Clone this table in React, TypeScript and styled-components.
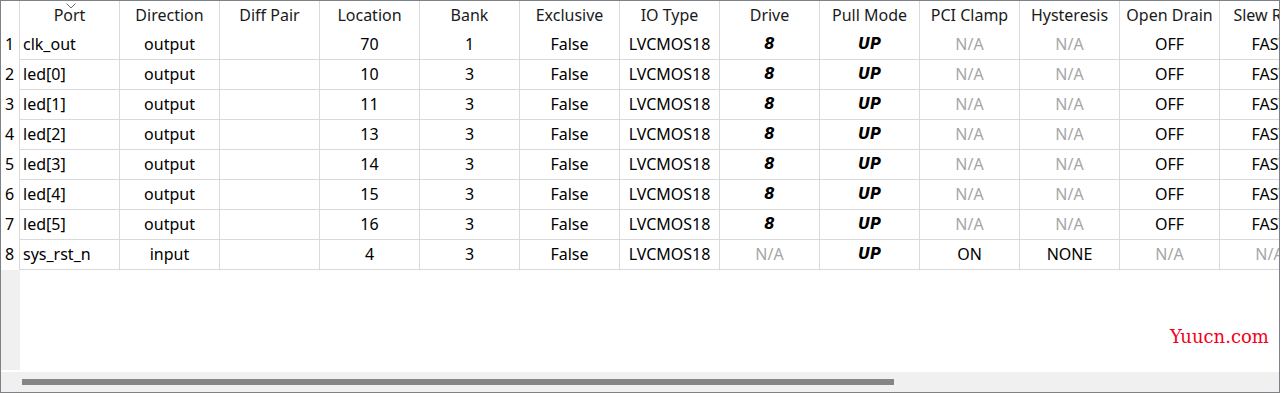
import React from 'react'
import styled, { createGlobalStyle } from 'styled-components'

const GlobalStyle = createGlobalStyle`
    html, body {
        margin: 0;
        padding: 0;
        background: #FFFFFF;
    }
`

/* styled elements */
const Frame = styled.div`
    position: relative;
    width: 1280px;
    height: 393px;
    box-sizing: border-box;
    border: 1px solid #7D828A;
    background: #FFFFFF;
    display: flex;
    flex-direction: column;
    overflow: hidden;
    font-family: "Noto Sans", "Noto Sans CJK SC", sans-serif;
    font-size: 16px;
    color: #000000;
`

const Viewport = styled.div`
    height: 371px;
    flex: none;
    display: flex;
    overflow: hidden;
`

const Gutter = styled.div`
    width: 19px;
    flex: none;
    display: flex;
    flex-direction: column;
`

const GutterHead = styled.div`
    height: 29px;
    flex: none;
    box-sizing: border-box;
    border-right: 1px solid #D9D9D9;
`

const RowNumber = styled.div`
    height: 30px;
    flex: none;
    box-sizing: border-box;
    border-right: 1px solid #D9D9D9;
    display: flex;
    align-items: center;
    justify-content: center;
    padding: 0 1px 2px 0;
`

const GutterFill = styled.div`
    height: 100px;
    flex: none;
    background: #F0F0F0;
`

const Grid = styled.div`
    display: grid;
    grid-template-columns: repeat(13, 100px);
    grid-auto-rows: 30px;
    grid-template-rows: 29px;
    align-content: start;
    flex: none;
`

const HeadCell = styled.div`
    position: relative;
    box-sizing: border-box;
    border-right: 1px solid #D9D9D9;
    display: flex;
    align-items: center;
    justify-content: center;
    padding-bottom: 2px;
    white-space: nowrap;
    color: #1A1A1A;
`

const SortMark = styled.svg`
    position: absolute;
    top: 2px;
    left: 46px;
`

const Cell = styled.div<{ align?: 'left' | 'center', tone?: 'muted' | 'strong' }>`
    box-sizing: border-box;
    border-right: 1px solid #D9D9D9;
    border-bottom: 1px solid #D9D9D9;
    display: flex;
    align-items: center;
    justify-content: ${({ align }) => align === 'left' ? 'flex-start' : 'center'};
    padding-left: ${({ align }) => align === 'left' ? '3px' : '0'};
    padding-bottom: 2px;
    white-space: nowrap;
    overflow: hidden;
    color: ${({ tone }) => tone === 'muted' ? '#A6A6A6' : '#000000'};
    ${({ tone }) => tone === 'strong' && `
        font-family: "DejaVu Sans", sans-serif;
        font-weight: 700;
        font-style: italic;
        font-size: 15px;
    `}
`

const ScrollTrack = styled.div`
    height: 20px;
    flex: none;
    background: #F0F0F0;
    display: flex;
    align-items: center;
    padding-left: 21px;
`

const ScrollThumb = styled.div`
    width: 872px;
    height: 6px;
    background: #858585;
`

const Watermark = styled.div`
    position: absolute;
    left: 1169px;
    top: 325px;
    font-family: "DejaVu Serif", "Liberation Serif", serif;
    font-size: 18px;
    color: #F2001C;
`

const columns = [
    'Port', 'Direction', 'Diff Pair', 'Location', 'Bank', 'Exclusive', 'IO Type',
    'Drive', 'Pull Mode', 'PCI Clamp', 'Hysteresis', 'Open Drain', 'Slew Rate',
]

type Port = {
    name: string
    dir: string
    loc: string
    bank: string
    drive: string
    pci: string
    hyst: string
    drain: string
    slew: string
}

const outputPin = (name: string, loc: string, bank: string): Port => ({
    name, dir: 'output', loc, bank, drive: '8', pci: 'N/A', hyst: 'N/A', drain: 'OFF', slew: 'FAST',
})

const ports: Port[] = [
    outputPin('clk_out', '70', '1'),
    outputPin('led[0]', '10', '3'),
    outputPin('led[1]', '11', '3'),
    outputPin('led[2]', '13', '3'),
    outputPin('led[3]', '14', '3'),
    outputPin('led[4]', '15', '3'),
    outputPin('led[5]', '16', '3'),
    { name: 'sys_rst_n', dir: 'input', loc: '4', bank: '3', drive: 'N/A', pci: 'ON', hyst: 'NONE', drain: 'N/A', slew: 'N/A' },
]

const toneOf = (value: string) => value === 'N/A' ? 'muted' : undefined

export const PinTable = () => {
    return (
        <Frame>
            <Viewport>
                <Gutter>
                    <GutterHead />
                    { ports.map((_, index) => (
                        <RowNumber key={`num ${index}`}>{ index + 1 }</RowNumber>
                    )) }
                    <GutterFill />
                </Gutter>

                <Grid>
                    { columns.map((title, index) => (
                        <HeadCell key={title}>
                            { index === 0 && (
                                <SortMark width="10" height="6" viewBox="0 0 10 6">
                                    <path d="M0.5 0.5 L5 5 L9.5 0.5" fill="none" stroke="#6E6E6E" strokeWidth="1" />
                                </SortMark>
                            ) }
                            { title }
                        </HeadCell>
                    )) }

                    { ports.map(port => (
                        <React.Fragment key={port.name}>
                            <Cell align="left">{ port.name }</Cell>
                            <Cell>{ port.dir }</Cell>
                            <Cell />
                            <Cell>{ port.loc }</Cell>
                            <Cell>{ port.bank }</Cell>
                            <Cell>False</Cell>
                            <Cell>LVCMOS18</Cell>
                            <Cell tone={ port.drive === 'N/A' ? 'muted' : 'strong' }>{ port.drive }</Cell>
                            <Cell tone="strong">UP</Cell>
                            <Cell tone={ toneOf(port.pci) }>{ port.pci }</Cell>
                            <Cell tone={ toneOf(port.hyst) }>{ port.hyst }</Cell>
                            <Cell tone={ toneOf(port.drain) }>{ port.drain }</Cell>
                            <Cell tone={ toneOf(port.slew) }>{ port.slew }</Cell>
                        </React.Fragment>
                    )) }
                </Grid>
            </Viewport>

            <ScrollTrack>
                <ScrollThumb />
            </ScrollTrack>

            <Watermark>Yuucn.com</Watermark>
        </Frame>
    )
}

const App = () => (
    <>
        <GlobalStyle />
        <PinTable />
    </>
)

export default App
